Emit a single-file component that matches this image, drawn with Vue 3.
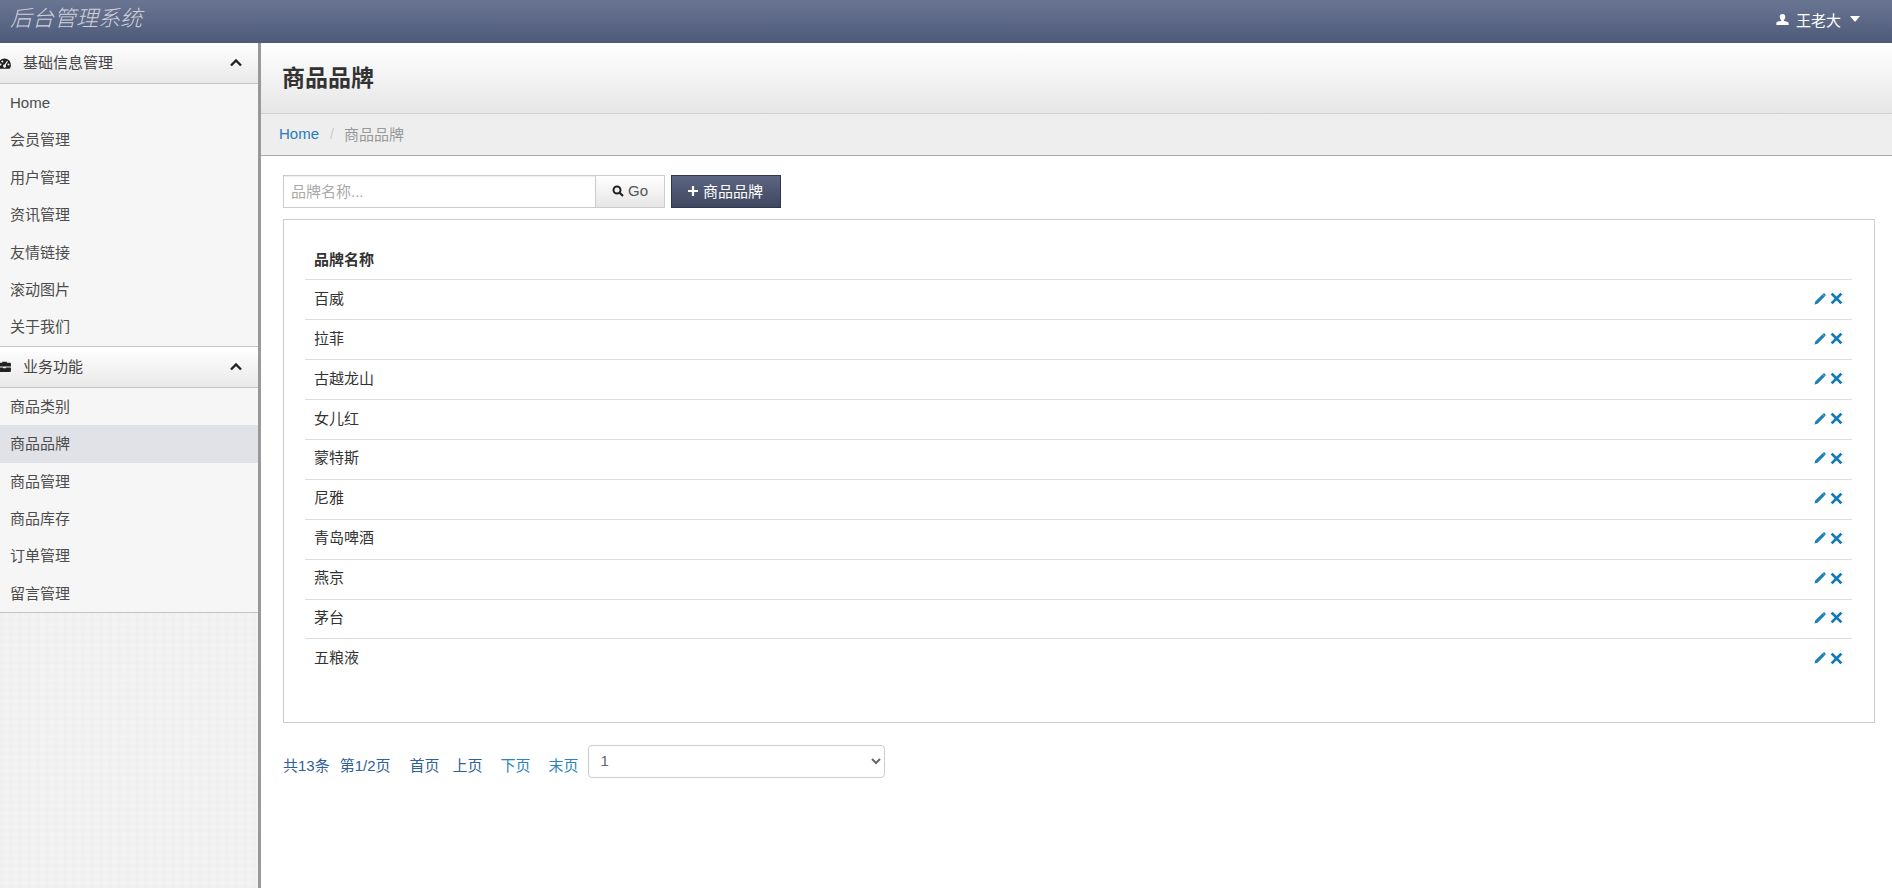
<script setup>
const groups = [
  {
    title: '基础信息管理',
    icon: 'dash',
    items: ['Home', '会员管理', '用户管理', '资讯管理', '友情链接', '滚动图片', '关于我们'],
  },
  {
    title: '业务功能',
    icon: 'case',
    items: ['商品类别', '商品品牌', '商品管理', '商品库存', '订单管理', '留言管理'],
  },
]
const brands = ['百威', '拉菲', '古越龙山', '女儿红', '蒙特斯', '尼雅', '青岛啤酒', '燕京', '茅台', '五粮液']
const pager = ['共13条', '第1/2页', '首页', '上页', '下页', '末页']
</script>

<template>
  <div class="page">
    <header class="top">
      <span class="brand">后台管理系统</span>
      <div class="user">
        <svg class="user-ico" viewBox="0 0 14 12"><path d="M7 0c1.900 0 3 1.300 3 3s-.7 2.900-1.500 3.500V7.500c2.300.4 4.800.9 5.200 2V12H.3V9.500c.4-1.100 2.900-1.600 5.200-2V6.500C4.700 5.900 4 4.700 4 3s1.100-3 3-3z" fill="#fff"/></svg>
        <span>王老大</span>
        <svg class="caret" viewBox="0 0 10 6"><path d="M0 0h10L5 6z" fill="#fff"/></svg>
      </div>
    </header>
    <div class="body">
      <aside class="side">
        <section v-for="g in groups" :key="g.title" class="group">
          <div class="group-head">
            <svg v-if="g.icon === 'dash'" class="group-ico" viewBox="0 0 14 12">
              <path fill-rule="evenodd" d="M7 .5A7 7 0 0 0 0 7.500c0 1.500.4 2.800 1.200 3.900.2.300.5.300.8.300h10c.3 0 .6 0 .8-.3.800-1.100 1.200-2.400 1.200-3.900A7 7 0 0 0 7 .5zM2.600 6a1.100 1.100 0 1 1 0 2.200 1.100 1.100 0 0 1 0-2.200zm2-3.200a1.100 1.100 0 1 1 0 2.200 1.100 1.100 0 0 1 0-2.200zM9.800 3l1 .5-2.500 4.300a1.600 1.600 0 1 1-1.200-.6zM11.400 6a1.100 1.100 0 1 1 0 2.200 1.100 1.100 0 0 1 0-2.200z" fill="#222"/>
            </svg>
            <svg v-else class="group-ico" viewBox="0 0 14 12">
              <path d="M4.500 2V.8h5V2H13a1 1 0 0 1 1 1v3H0V3a1 1 0 0 1 1-1zm1-.200V2h3v-.200zM0 7h5.500v1h3V7H14v4a1 1 0 0 1-1 1H1a1 1 0 0 1-1-1z" fill="#222"/>
            </svg>
            <span class="group-title">{{ g.title }}</span>
            <svg class="chev" viewBox="0 0 12 8"><path d="M1 6.500 6 1.500l5 5" fill="none" stroke="#222" stroke-width="2.400"/></svg>
          </div>
          <ul class="menu">
            <li v-for="item in g.items" :key="item" :class="{ active: item === '商品品牌' }">{{ item }}</li>
          </ul>
        </section>
      </aside>
      <main class="main">
        <div class="title"><h1>商品品牌</h1></div>
        <div class="crumb">
          <a class="home">Home</a>
          <span class="sep">/</span>
          <span class="cur">商品品牌</span>
        </div>
        <div class="content">
          <div class="tools">
            <input class="search" placeholder="品牌名称..." />
            <button class="go">
              <svg class="go-ico" viewBox="0 0 12 12"><circle cx="5" cy="5" r="3.500" fill="none" stroke="#222" stroke-width="2"/><path d="M7.500 7.500 11 11" stroke="#222" stroke-width="2.200"/></svg>
              Go
            </button>
            <button class="add">
              <svg class="add-ico" viewBox="0 0 12 12"><path d="M6 1v10M1 6h10" stroke="#fff" stroke-width="2.200"/></svg>
              商品品牌
            </button>
          </div>
          <div class="box">
            <table class="table">
              <thead>
                <tr><th>品牌名称</th><th></th></tr>
              </thead>
              <tbody>
                <tr v-for="b in brands" :key="b">
                  <td>{{ b }}</td>
                  <td class="ops">
                    <svg class="pen" viewBox="0 0 12 12"><path d="M.5 11.500l.7-3L8.500 1.200l2.300 2.300L3.500 10.800zM9.300.6l.8-.500 1.800 1.800-.5.800-.6.500-2.100-2.100z" fill="#1f80b8"/></svg>
                    <svg class="del" viewBox="0 0 12 12"><path d="M1.500 1.500l9 9M10.500 1.500l-9 9" stroke="#0f7ab8" stroke-width="2.600"/></svg>
                  </td>
                </tr>
              </tbody>
            </table>
          </div>
          <div class="pager">
            <a v-for="p in pager" :key="p" class="plink">{{ p }}</a>
            <select class="pick"><option>1</option><option>2</option></select>
          </div>
        </div>
      </main>
    </div>
  </div>
</template>

<style>
html, body { margin: 0; height: 100%; overflow: hidden; background: #fff; }
</style>

<style scoped>
* { box-sizing: border-box; }
.page {
  height: 888px;
  display: flex;
  flex-direction: column;
  font-family: "Liberation Sans", "Noto Sans CJK SC", sans-serif;
  font-size: 15px;
  color: #333;
}
.top {
  height: 43px;
  flex: none;
  display: flex;
  align-items: center;
  justify-content: space-between;
  padding: 0 32px 0 10px;
  background: linear-gradient(#6a7592, #4d5a79);
}
.brand {
  font-size: 22px;
  font-style: italic;
  font-weight: 300;
  color: #cdd1da;
  margin-top: -11px;
}
.user {
  display: flex;
  align-items: center;
  color: #fff;
  font-size: 15px;
  margin-top: -5px;
}
.user-ico { width: 13px; height: 11px; margin-right: 7px; }
.caret { width: 10px; height: 6px; margin-left: 9px; }
.body { flex: 1; display: flex; min-height: 0; }
.side {
  width: 261px;
  flex: none;
  border-right: 3px solid #999;
  background-color: #f3f3f3;
  background-image:
    repeating-linear-gradient(0deg, rgba(0,0,0,.006) 0 3px, transparent 3px 7px),
    repeating-linear-gradient(90deg, rgba(0,0,0,.006) 0 4px, transparent 4px 9px);
}
.group-head {
  height: 41px;
  display: flex;
  align-items: center;
  border-bottom: 1px solid #c4c4c4;
  background: linear-gradient(#fff, #e9e9e9);
  font-size: 15px;
  color: #444;
}
.group-ico { width: 13px; height: 11px; margin-left: -2px; flex: none; }
.group-title { margin-left: 12px; flex: 1; margin-top: -3px; }
.chev { width: 12px; height: 8px; margin-right: 16px; }
.menu {
  list-style: none;
  margin: 0;
  padding: 0;
  background: #f6f6f6;
  border-bottom: 1px solid #c4c4c4;
}
.menu li {
  height: 37.400px;
  line-height: 37.400px;
  padding-left: 10px;
  font-size: 15px;
  color: #4c4c4c;
}
.menu li.active { background: #e1e1e8; }
.main { flex: 1; min-width: 0; background: #fff; }
.title {
  height: 71px;
  display: flex;
  align-items: center;
  padding-left: 21px;
  background: linear-gradient(#fff, #e6e6e6);
  border-bottom: 1px solid #cfcfcf;
}
.title h1 {
  margin: 0 0 4px;
  font-size: 23px;
  font-weight: 700;
  color: #333;
}
.crumb {
  height: 42px;
  display: flex;
  align-items: center;
  padding: 0 0 2px 18px;
  background: #eee;
  border-bottom: 1px solid #aaa;
  font-size: 15px;
}
.home { color: #2a7ab8; }
.sep { margin: 0 10px 0 11px; color: #ccc; font-size: 14px; }
.cur { color: #999; }
.content { padding: 19px 17px 0 22px; }
.tools { display: flex; height: 33px; }
.search {
  width: 312px;
  height: 33px;
  border: 1px solid #ccc;
  border-right: 0;
  padding: 0 7px;
  font: inherit;
  outline: 0;
  box-shadow: inset 0 1px 1px rgba(0,0,0,.075);
}
.search::placeholder { color: #aaa; }
.go {
  width: 70px;
  height: 33px;
  display: flex;
  align-items: center;
  justify-content: center;
  border: 1px solid #ccc;
  background: linear-gradient(#fff, #e6e6e6);
  font: 15px "Liberation Sans", sans-serif;
  color: #555;
  padding: 0 0 2px;
}
.go-ico { width: 12px; height: 12px; margin-right: 4px; }
.add {
  margin-left: 6px;
  width: 110px;
  height: 33px;
  display: flex;
  align-items: center;
  justify-content: center;
  border: 1px solid #2f3650;
  background: linear-gradient(#5c6682, #3f4760);
  font: inherit;
  color: #fff;
  padding: 0 2px 2px 0;
}
.add-ico { width: 12px; height: 12px; margin-right: 4px; }
.box {
  margin-top: 11px;
  height: 504px;
  border: 1px solid #ccc;
  padding: 20px 22px 0 21px;
}
.table { width: 100%; border-collapse: collapse; }
.table th, .table td {
  height: 39.900px;
  padding: 0 9px;
  text-align: left;
  font-size: 15px;
}
.table th { font-weight: 700; color: #333; padding-bottom: 2px; }
.table tbody td { border-top: 1px solid #ddd; padding-bottom: 5px; }
.table .ops { text-align: right; padding-right: 9px; white-space: nowrap; }
.pen { width: 12px; height: 12px; vertical-align: middle; }
.del { width: 13px; height: 13px; margin-left: 4px; vertical-align: middle; }
.pager { margin-top: 22px; display: flex; align-items: center; height: 33px; font-size: 15px; }
.plink { padding-top: 5px; color: #2f6099; }
.plink:nth-child(2) { margin-left: 10px; }
.plink:nth-child(3) { margin-left: 19px; }
.plink:nth-child(4) { margin-left: 13px; }
.plink:nth-child(5) { margin-left: 18px; color: #2a84c0; }
.plink:nth-child(6) { margin-left: 18px; color: #2a84c0; }
.pick {
  margin-left: 9px;
  width: 297px;
  height: 33px;
  border: 1px solid #ccc;
  border-radius: 4px;
  background: #fff;
  padding: 0 8px 3px;
  font: 15px "Liberation Sans", sans-serif;
  color: #666;
}
</style>
